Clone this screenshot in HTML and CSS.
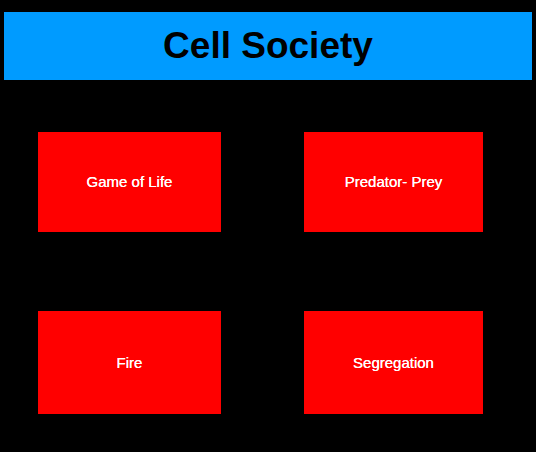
FILE: index.html
```
<!DOCTYPE html>
<html lang="en">
<head>
<meta charset="utf-8">
<title>Cell Society</title>
<link rel="stylesheet" href="styles.css">
</head>
<body>
<header class="banner"><h1>Cell Society</h1></header>
<main class="menu">
<button class="tile" type="button">Game of Life</button>
<button class="tile" type="button">Predator- Prey</button>
<button class="tile" type="button">Fire</button>
<button class="tile" type="button">Segregation</button>
</main>
</body>
</html>
```
FILE: styles.css
```
* {
  box-sizing: border-box;
}

body {
  margin: 0;
  padding: 12px 4px 0;
  background: #000;
  font-family: "Liberation Sans", Arial, sans-serif;
}

.banner {
  padding: 12px;
  background: #009bff;
  text-align: center;
}

h1 {
  margin: 0;
  color: #000;
  font-size: 37px;
  line-height: 44px;
}

.menu {
  display: grid;
  grid-template-columns: 183fr 179fr;
  grid-template-rows: 100px 103px;
  gap: 79px 83px;
  padding: 52px 49px 38px 34px;
}

.tile {
  padding: 0;
  border: 0;
  background: #ff0000;
  color: #fff;
  font: 15px/20px "Liberation Sans", Arial, sans-serif;
  text-shadow: 0 0 #fff;
  cursor: pointer;
}
```
